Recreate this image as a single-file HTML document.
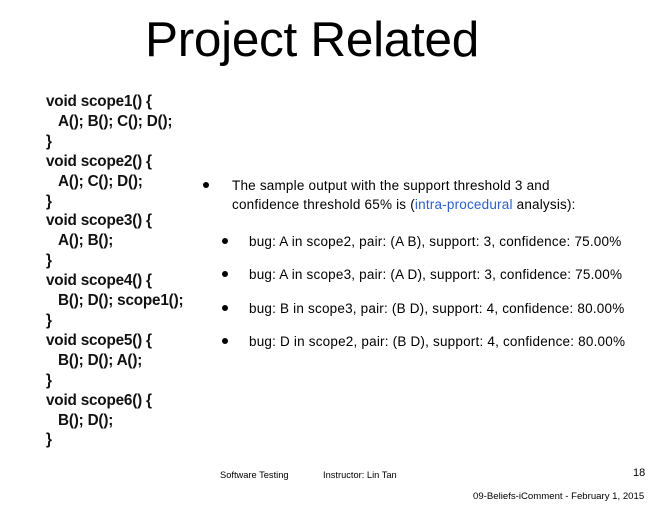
<!DOCTYPE html>
<html><head><style>
body{margin:0;width:660px;height:510px;background:#fff;position:relative;overflow:hidden;font-family:"Liberation Sans",sans-serif;color:#000}
.t{position:absolute;left:145px;top:11px;font-size:49.5px;letter-spacing:-0.3px;white-space:nowrap}
.code{position:absolute;left:46px;top:92px;font-size:15.3px;font-weight:bold;line-height:19.9px;color:#111;letter-spacing:-0.2px}
.code div{white-space:nowrap}
.code .i{padding-left:12px}
.a{position:absolute;font-size:13.5px;white-space:nowrap;line-height:19px;letter-spacing:0.2px}
.b{position:absolute;width:6px;height:6px;border-radius:50%;background:#000}
.f{position:absolute;font-size:9.3px;white-space:nowrap}
</style></head><body>
<div class="t">Project Related</div>
<div class="code">
<div>void scope1() {</div><div class="i">A(); B(); C(); D();</div><div>}</div>
<div>void scope2() {</div><div class="i">A(); C(); D();</div><div>}</div>
<div>void scope3() {</div><div class="i">A(); B();</div><div>}</div>
<div>void scope4() {</div><div class="i">B(); D(); scope1();</div><div>}</div>
<div>void scope5() {</div><div class="i">B(); D(); A();</div><div>}</div>
<div>void scope6() {</div><div class="i">B(); D();</div><div>}</div>
</div>
<div class="b" style="left:203px;top:182px"></div>
<div class="a" style="left:232px;top:176px">The sample output with the support threshold 3 and<br>confidence threshold 65% is (<span style="color:#2a5fd8">intra-procedural</span> analysis):</div>
<div class="b" style="left:222px;top:238px"></div>
<div class="a" style="left:249px;top:232px">bug: A in scope2, pair: (A B), support: 3, confidence: 75.00%</div>
<div class="b" style="left:222px;top:271px"></div>
<div class="a" style="left:249px;top:265px">bug: A in scope3, pair: (A D), support: 3, confidence: 75.00%</div>
<div class="b" style="left:222px;top:305px"></div>
<div class="a" style="left:249px;top:299px">bug: B in scope3, pair: (B D), support: 4, confidence: 80.00%</div>
<div class="b" style="left:222px;top:338px"></div>
<div class="a" style="left:249px;top:332px">bug: D in scope2, pair: (B D), support: 4, confidence: 80.00%</div>
<div class="f" style="left:220px;top:470px">Software Testing</div>
<div class="f" style="left:323px;top:470px">Instructor: Lin Tan</div>
<div class="f" style="left:633px;top:467px;font-size:11px">18</div>
<div class="f" style="left:473px;top:491px;font-size:9.6px">09-Beliefs-iComment - February 1, 2015</div>
</body></html>
